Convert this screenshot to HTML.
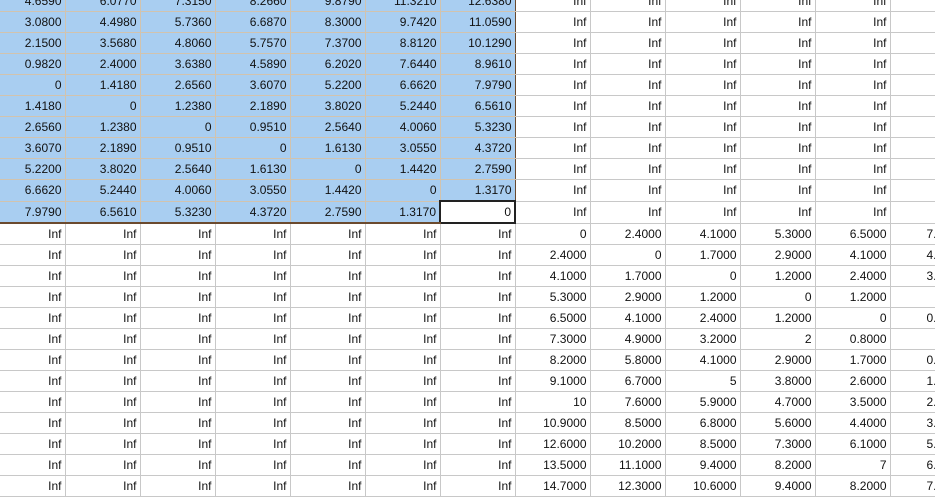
<!DOCTYPE html>
<html><head><meta charset="utf-8"><style>
html,body{margin:0;padding:0;background:#fff;width:935px;height:484px;overflow:hidden}
table{position:absolute;left:-10px;top:-9px;width:975px;border-collapse:collapse;table-layout:fixed;font-family:"Liberation Sans",sans-serif;font-size:12px;color:#111}
td{height:20px;padding:0 3px 0 0;text-align:right;border-right:1px solid #c8c8c8;border-bottom:1px solid #c8c8c8;white-space:nowrap;overflow:hidden;line-height:20px}
td.s{background:#a9cef1;border-right-color:#d2c3ae;border-bottom-color:#d2c3ae}
tr.last td.s{border-bottom:2px solid #6b4a2e}
td.e{border-right:1px solid #6b4a2e}
td.a{background:#fff;border:2px solid #222}
td.c{text-align:left;padding-left:36px}
</style></head><body>
<table>
<colgroup><col style="width:75px"><col style="width:75px"><col style="width:75px"><col style="width:75px"><col style="width:75px"><col style="width:75px"><col style="width:75px"><col style="width:75px"><col style="width:75px"><col style="width:75px"><col style="width:75px"><col style="width:75px"><col style="width:75px"></colgroup>
<tr><td class="s">4.6590</td><td class="s">6.0770</td><td class="s">7.3150</td><td class="s">8.2660</td><td class="s">9.8790</td><td class="s">11.3210</td><td class="s e">12.6380</td><td>Inf</td><td>Inf</td><td>Inf</td><td>Inf</td><td>Inf</td><td></td></tr>
<tr><td class="s">3.0800</td><td class="s">4.4980</td><td class="s">5.7360</td><td class="s">6.6870</td><td class="s">8.3000</td><td class="s">9.7420</td><td class="s e">11.0590</td><td>Inf</td><td>Inf</td><td>Inf</td><td>Inf</td><td>Inf</td><td></td></tr>
<tr><td class="s">2.1500</td><td class="s">3.5680</td><td class="s">4.8060</td><td class="s">5.7570</td><td class="s">7.3700</td><td class="s">8.8120</td><td class="s e">10.1290</td><td>Inf</td><td>Inf</td><td>Inf</td><td>Inf</td><td>Inf</td><td></td></tr>
<tr><td class="s">0.9820</td><td class="s">2.4000</td><td class="s">3.6380</td><td class="s">4.5890</td><td class="s">6.2020</td><td class="s">7.6440</td><td class="s e">8.9610</td><td>Inf</td><td>Inf</td><td>Inf</td><td>Inf</td><td>Inf</td><td></td></tr>
<tr><td class="s">0</td><td class="s">1.4180</td><td class="s">2.6560</td><td class="s">3.6070</td><td class="s">5.2200</td><td class="s">6.6620</td><td class="s e">7.9790</td><td>Inf</td><td>Inf</td><td>Inf</td><td>Inf</td><td>Inf</td><td></td></tr>
<tr><td class="s">1.4180</td><td class="s">0</td><td class="s">1.2380</td><td class="s">2.1890</td><td class="s">3.8020</td><td class="s">5.2440</td><td class="s e">6.5610</td><td>Inf</td><td>Inf</td><td>Inf</td><td>Inf</td><td>Inf</td><td></td></tr>
<tr><td class="s">2.6560</td><td class="s">1.2380</td><td class="s">0</td><td class="s">0.9510</td><td class="s">2.5640</td><td class="s">4.0060</td><td class="s e">5.3230</td><td>Inf</td><td>Inf</td><td>Inf</td><td>Inf</td><td>Inf</td><td></td></tr>
<tr><td class="s">3.6070</td><td class="s">2.1890</td><td class="s">0.9510</td><td class="s">0</td><td class="s">1.6130</td><td class="s">3.0550</td><td class="s e">4.3720</td><td>Inf</td><td>Inf</td><td>Inf</td><td>Inf</td><td>Inf</td><td></td></tr>
<tr><td class="s">5.2200</td><td class="s">3.8020</td><td class="s">2.5640</td><td class="s">1.6130</td><td class="s">0</td><td class="s">1.4420</td><td class="s e">2.7590</td><td>Inf</td><td>Inf</td><td>Inf</td><td>Inf</td><td>Inf</td><td></td></tr>
<tr><td class="s">6.6620</td><td class="s">5.2440</td><td class="s">4.0060</td><td class="s">3.0550</td><td class="s">1.4420</td><td class="s">0</td><td class="s e">1.3170</td><td>Inf</td><td>Inf</td><td>Inf</td><td>Inf</td><td>Inf</td><td></td></tr>
<tr class="last"><td class="s">7.9790</td><td class="s">6.5610</td><td class="s">5.3230</td><td class="s">4.3720</td><td class="s">2.7590</td><td class="s">1.3170</td><td class="a">0</td><td>Inf</td><td>Inf</td><td>Inf</td><td>Inf</td><td>Inf</td><td></td></tr>
<tr><td>Inf</td><td>Inf</td><td>Inf</td><td>Inf</td><td>Inf</td><td>Inf</td><td>Inf</td><td>0</td><td>2.4000</td><td>4.1000</td><td>5.3000</td><td>6.5000</td><td class="c">7.</td></tr>
<tr><td>Inf</td><td>Inf</td><td>Inf</td><td>Inf</td><td>Inf</td><td>Inf</td><td>Inf</td><td>2.4000</td><td>0</td><td>1.7000</td><td>2.9000</td><td>4.1000</td><td class="c">4.</td></tr>
<tr><td>Inf</td><td>Inf</td><td>Inf</td><td>Inf</td><td>Inf</td><td>Inf</td><td>Inf</td><td>4.1000</td><td>1.7000</td><td>0</td><td>1.2000</td><td>2.4000</td><td class="c">3.</td></tr>
<tr><td>Inf</td><td>Inf</td><td>Inf</td><td>Inf</td><td>Inf</td><td>Inf</td><td>Inf</td><td>5.3000</td><td>2.9000</td><td>1.2000</td><td>0</td><td>1.2000</td><td class="c"></td></tr>
<tr><td>Inf</td><td>Inf</td><td>Inf</td><td>Inf</td><td>Inf</td><td>Inf</td><td>Inf</td><td>6.5000</td><td>4.1000</td><td>2.4000</td><td>1.2000</td><td>0</td><td class="c">0.</td></tr>
<tr><td>Inf</td><td>Inf</td><td>Inf</td><td>Inf</td><td>Inf</td><td>Inf</td><td>Inf</td><td>7.3000</td><td>4.9000</td><td>3.2000</td><td>2</td><td>0.8000</td><td class="c"></td></tr>
<tr><td>Inf</td><td>Inf</td><td>Inf</td><td>Inf</td><td>Inf</td><td>Inf</td><td>Inf</td><td>8.2000</td><td>5.8000</td><td>4.1000</td><td>2.9000</td><td>1.7000</td><td class="c">0.</td></tr>
<tr><td>Inf</td><td>Inf</td><td>Inf</td><td>Inf</td><td>Inf</td><td>Inf</td><td>Inf</td><td>9.1000</td><td>6.7000</td><td>5</td><td>3.8000</td><td>2.6000</td><td class="c">1.</td></tr>
<tr><td>Inf</td><td>Inf</td><td>Inf</td><td>Inf</td><td>Inf</td><td>Inf</td><td>Inf</td><td>10</td><td>7.6000</td><td>5.9000</td><td>4.7000</td><td>3.5000</td><td class="c">2.</td></tr>
<tr><td>Inf</td><td>Inf</td><td>Inf</td><td>Inf</td><td>Inf</td><td>Inf</td><td>Inf</td><td>10.9000</td><td>8.5000</td><td>6.8000</td><td>5.6000</td><td>4.4000</td><td class="c">3.</td></tr>
<tr><td>Inf</td><td>Inf</td><td>Inf</td><td>Inf</td><td>Inf</td><td>Inf</td><td>Inf</td><td>12.6000</td><td>10.2000</td><td>8.5000</td><td>7.3000</td><td>6.1000</td><td class="c">5.</td></tr>
<tr><td>Inf</td><td>Inf</td><td>Inf</td><td>Inf</td><td>Inf</td><td>Inf</td><td>Inf</td><td>13.5000</td><td>11.1000</td><td>9.4000</td><td>8.2000</td><td>7</td><td class="c">6.</td></tr>
<tr><td>Inf</td><td>Inf</td><td>Inf</td><td>Inf</td><td>Inf</td><td>Inf</td><td>Inf</td><td>14.7000</td><td>12.3000</td><td>10.6000</td><td>9.4000</td><td>8.2000</td><td class="c">7.</td></tr>
</table>
</body></html>
